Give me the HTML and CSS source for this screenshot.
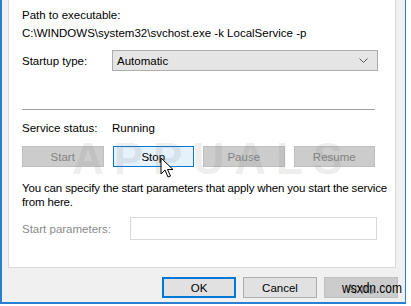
FILE: index.html
```html
<!DOCTYPE html>
<html>
<head>
<meta charset="utf-8">
<link rel="stylesheet" href="styles.css">
</head>
<body>
<div class="window">
  <div class="panel">
    <div class="label first">Path to executable:</div>
    <div class="label">C:\WINDOWS\system32\svchost.exe -k LocalService -p</div>
    <div class="row startup">
      <div class="key">Startup type:</div>
      <div class="select"><span>Automatic</span>
        <svg class="chev" width="9" height="5" viewBox="0 0 9 5"><path d="M0.5 0.5 L4.5 4.5 L8.5 0.5" fill="none" stroke="#555" stroke-width="1"/></svg>
      </div>
    </div>
    <div class="sep"></div>
    <div class="row status">
      <div class="key">Service status:</div>
      <div>Running</div>
    </div>
    <div class="btnrow">
      <div class="btn dis">Start</div>
      <div class="btn hot">Stop</div>
      <div class="btn dis">Pause</div>
      <div class="btn dis">Resume</div>
    </div>
    <div class="para">You can specify the start parameters that apply when you start the service<br>from here.</div>
    <div class="row params">
      <div class="key grey">Start parameters:</div>
      <div class="input"></div>
    </div>
  </div>
  <div class="footer">
    <div class="btn def">OK</div>
    <div class="btn">Cancel</div>
    <div class="btn dis">Apply</div>
  </div>
  <div class="watermark">APPUALS</div>
  <svg class="cursor" width="14" height="22" viewBox="0 0 14 22"><path d="M1 1 L1 17 L5 13 L8 20 L10.5 19 L7.5 12.5 L13 12.5 Z" fill="#fff" stroke="#000" stroke-width="1" stroke-linejoin="miter"/></svg>
  <div class="site">wsxdn.com</div>
</div>
</body>
</html>
```
FILE: styles.css
```css
html, body {
  margin: 0;
  padding: 0;
  background: #ffffff;
}
body {
  font-family: "Liberation Sans", Arial, sans-serif;
  font-size: 11.5px;
  color: #000;
  width: 411px;
  height: 306px;
  overflow: hidden;
}
.window {
  position: relative;
  box-sizing: border-box;
  width: 406px;
  height: 304px;
  background: #f0f0f0;
  border-left: 2px solid #2b7fd3;
  border-right: 1px solid #2b7fd3;
  border-bottom: 2px solid #2b7fd3;
  padding: 0 9px 0 6px;
  display: flex;
  flex-direction: column;
}
.panel {
  box-sizing: border-box;
  height: 268px;
  flex: none;
  background: #fff;
  border: 1px solid #d9d9d9;
  border-top: none;
  padding: 0 17px 0 13px;
  display: flex;
  flex-direction: column;
}
.label {
  line-height: 15px;
  height: 15px;
}
.label.first {
  margin-top: 8px;
  margin-bottom: 3px;
}
.row {
  display: flex;
  align-items: center;
}
.key {
  width: 90px;
  flex: none;
}
.grey { color: #8a8a8a; }
.startup { margin-top: 9px; }
.select {
  box-sizing: border-box;
  flex: 1;
  height: 21px;
  background: #e5e5e5;
  border: 1px solid #adadad;
  display: flex;
  align-items: center;
  justify-content: space-between;
  padding: 0 9px 0 4px;
}
.chev { display: block; }
.sep {
  margin-top: 38px;
  height: 1px;
  background: #a0a0a0;
  margin-right: 3px;
}
.status {
  margin-top: 11px;
  line-height: 15px;
}
.btnrow {
  margin-top: 10px;
  display: flex;
  gap: 9px;
  margin-right: 3px;
}
.btn {
  box-sizing: border-box;
  height: 21px;
  border: 1px solid #adadad;
  background: #e1e1e1;
  display: flex;
  align-items: center;
  justify-content: center;
}
.btnrow .btn { flex: 1; }
.btn.dis {
  background: #cccccc;
  border-color: #bfbfbf;
  color: #838383;
}
.btn.hot {
  background: #e5f1fb;
  border-color: #0078d7;
}
.para {
  margin-top: 14px;
  line-height: 14px;
  white-space: nowrap;
  letter-spacing: -0.15px;
}
.params { margin-top: 8px; }
.key.grey { width: 108px; }
.input {
  box-sizing: border-box;
  flex: 1;
  height: 23px;
  border: 1px solid #d9d9d9;
  margin-right: 1px;
}
.footer {
  margin-top: 9px;
  display: flex;
  justify-content: flex-end;
  gap: 7px;
  margin-right: -2px;
}
.footer .btn { width: 74px; }
.footer .btn.def {
  border: 2px solid #0078d7;
}
.watermark {
  position: absolute;
  left: 70px;
  top: 134px;
  font-size: 44px;
  font-weight: bold;
  letter-spacing: 10px;
  color: rgba(120,120,120,0.15);
  pointer-events: none;
}
.cursor {
  position: absolute;
  left: 158px;
  top: 157px;
}
.site {
  position: absolute;
  left: 340px;
  top: 279px;
  font-size: 15px;
  color: #000;
  font-family: "Liberation Sans", Arial, sans-serif;
  transform: scaleX(0.8);
  transform-origin: left top;
}
```
